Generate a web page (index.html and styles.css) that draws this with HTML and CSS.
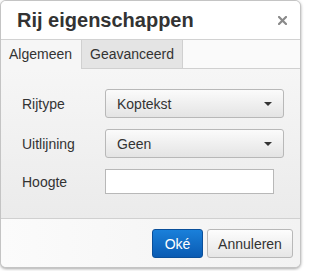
FILE: index.html
```html
<!DOCTYPE html>
<html>
<head>
<meta charset="utf-8">
<link rel="stylesheet" href="styles.css">
</head>
<body>
<div class="dialog">
  <div class="header">
    <span class="title">Rij eigenschappen</span>
    <span class="close"><svg width="9" height="9" viewBox="0 0 9 9"><path d="M1 1 L8 8 M8 1 L1 8" stroke="#8a8a8a" stroke-width="2.2" stroke-linecap="square"/></svg></span>
  </div>
  <div class="tabs">
    <div class="tab active">Algemeen</div>
    <div class="tab">Geavanceerd</div>
    <div class="tabfill"></div>
  </div>
  <div class="body">
    <div class="row">
      <label class="lbl">Rijtype</label>
      <div class="select"><span>Koptekst</span><span class="caret"></span></div>
    </div>
    <div class="row">
      <label class="lbl">Uitlijning</label>
      <div class="select"><span>Geen</span><span class="caret"></span></div>
    </div>
    <div class="row">
      <label class="lbl">Hoogte</label>
      <div class="input"></div>
    </div>
  </div>
  <div class="footer">
    <button class="btn ok">Oké</button>
    <button class="btn cancel">Annuleren</button>
  </div>
</div>
</body>
</html>
```
FILE: styles.css
```css
html, body { margin: 0; padding: 0; }
body {
  background: #ffffff;
  font-family: "Liberation Sans", Arial, sans-serif;
  color: #333;
  width: 304px;
  height: 271px;
}
.dialog {
  box-sizing: border-box;
  width: 301px;
  height: 268px;
  border: 1px solid #c4c4c4;
  border-radius: 6px;
  box-shadow: 0 1px 3px rgba(0,0,0,0.35);
  overflow: hidden;
  display: flex;
  flex-direction: column;
  background: #f4f4f4;
}
.header {
  height: 38px;
  border-bottom: 1px solid #d2d2d2;
  background: #ffffff;
  display: flex;
  align-items: center;
  justify-content: space-between;
  padding: 0 13px 0 16px;
  flex: none;
}
.title {
  font-size: 20px;
  font-weight: bold;
  color: #333;
  margin-top: 1px;
}
.close { display: flex; margin-top: 1px; }
.tabs {
  display: flex;
  height: 29px;
  flex: none;
  background: #fafafa;
}
.tab {
  font-size: 14px;
  line-height: 29px;
  padding: 0 8px;
  box-sizing: border-box;
  background: #e4e4e4;
  border-left: 1px solid #d0d0d0;
  border-right: 1px solid #d0d0d0;
  border-bottom: 1px solid #d0d0d0;
  color: #333;
}
.tab.active {
  background: #f6f6f6;
  border: none;
  width: 80px;
  padding-left: 8px;
}
.tabfill {
  flex: 1;
  border-bottom: 1px solid #d0d0d0;
}
.body {
  flex: 1;
  background: linear-gradient(#f6f6f6, #ebebeb);
  padding: 20px 0 0 0;
  display: flex;
  flex-direction: column;
  gap: 11px;
  border-bottom: 1px solid #d0d0d0;
}
.row {
  display: flex;
  align-items: center;
  height: 29px;
}
.row:last-child { height: 25px; }
.lbl {
  font-size: 14px;
  width: 83px;
  padding-left: 21px;
  color: #333;
}
.select {
  box-sizing: border-box;
  width: 179px;
  height: 29px;
  border: 1px solid #b8b8b8;
  border-radius: 3px;
  background: linear-gradient(#fbfbfb, #e4e4e4);
  display: flex;
  align-items: center;
  justify-content: space-between;
  padding: 0 11px 0 11px;
  font-size: 14px;
  color: #333;
}
.caret {
  width: 0;
  height: 0;
  border-left: 4px solid transparent;
  border-right: 4px solid transparent;
  border-top: 4px solid #333;
}
.input {
  box-sizing: border-box;
  width: 169px;
  height: 25px;
  border: 1px solid #b8b8b8;
  background: #fff;
}
.footer {
  height: 48px;
  flex: none;
  background: linear-gradient(90deg, #fbfbfb, #f2f2f2);
  display: flex;
  align-items: flex-start;
  justify-content: flex-end;
  padding: 10px 7px 0 0;
  box-sizing: border-box;
  gap: 4px;
}
.btn {
  font-family: "Liberation Sans", Arial, sans-serif;
  font-size: 14px;
  height: 29px;
  border-radius: 3px;
  box-sizing: border-box;
  margin: 0;
  padding: 0;
}
.ok {
  width: 51px;
  color: #fff;
  background: linear-gradient(#1a80da, #0a5bb3);
  border: 1px solid #0a4f9a;
}
.cancel {
  width: 86px;
  color: #333;
  background: linear-gradient(#fdfdfd, #e6e6e6);
  border: 1px solid #b8b8b8;
}
```
